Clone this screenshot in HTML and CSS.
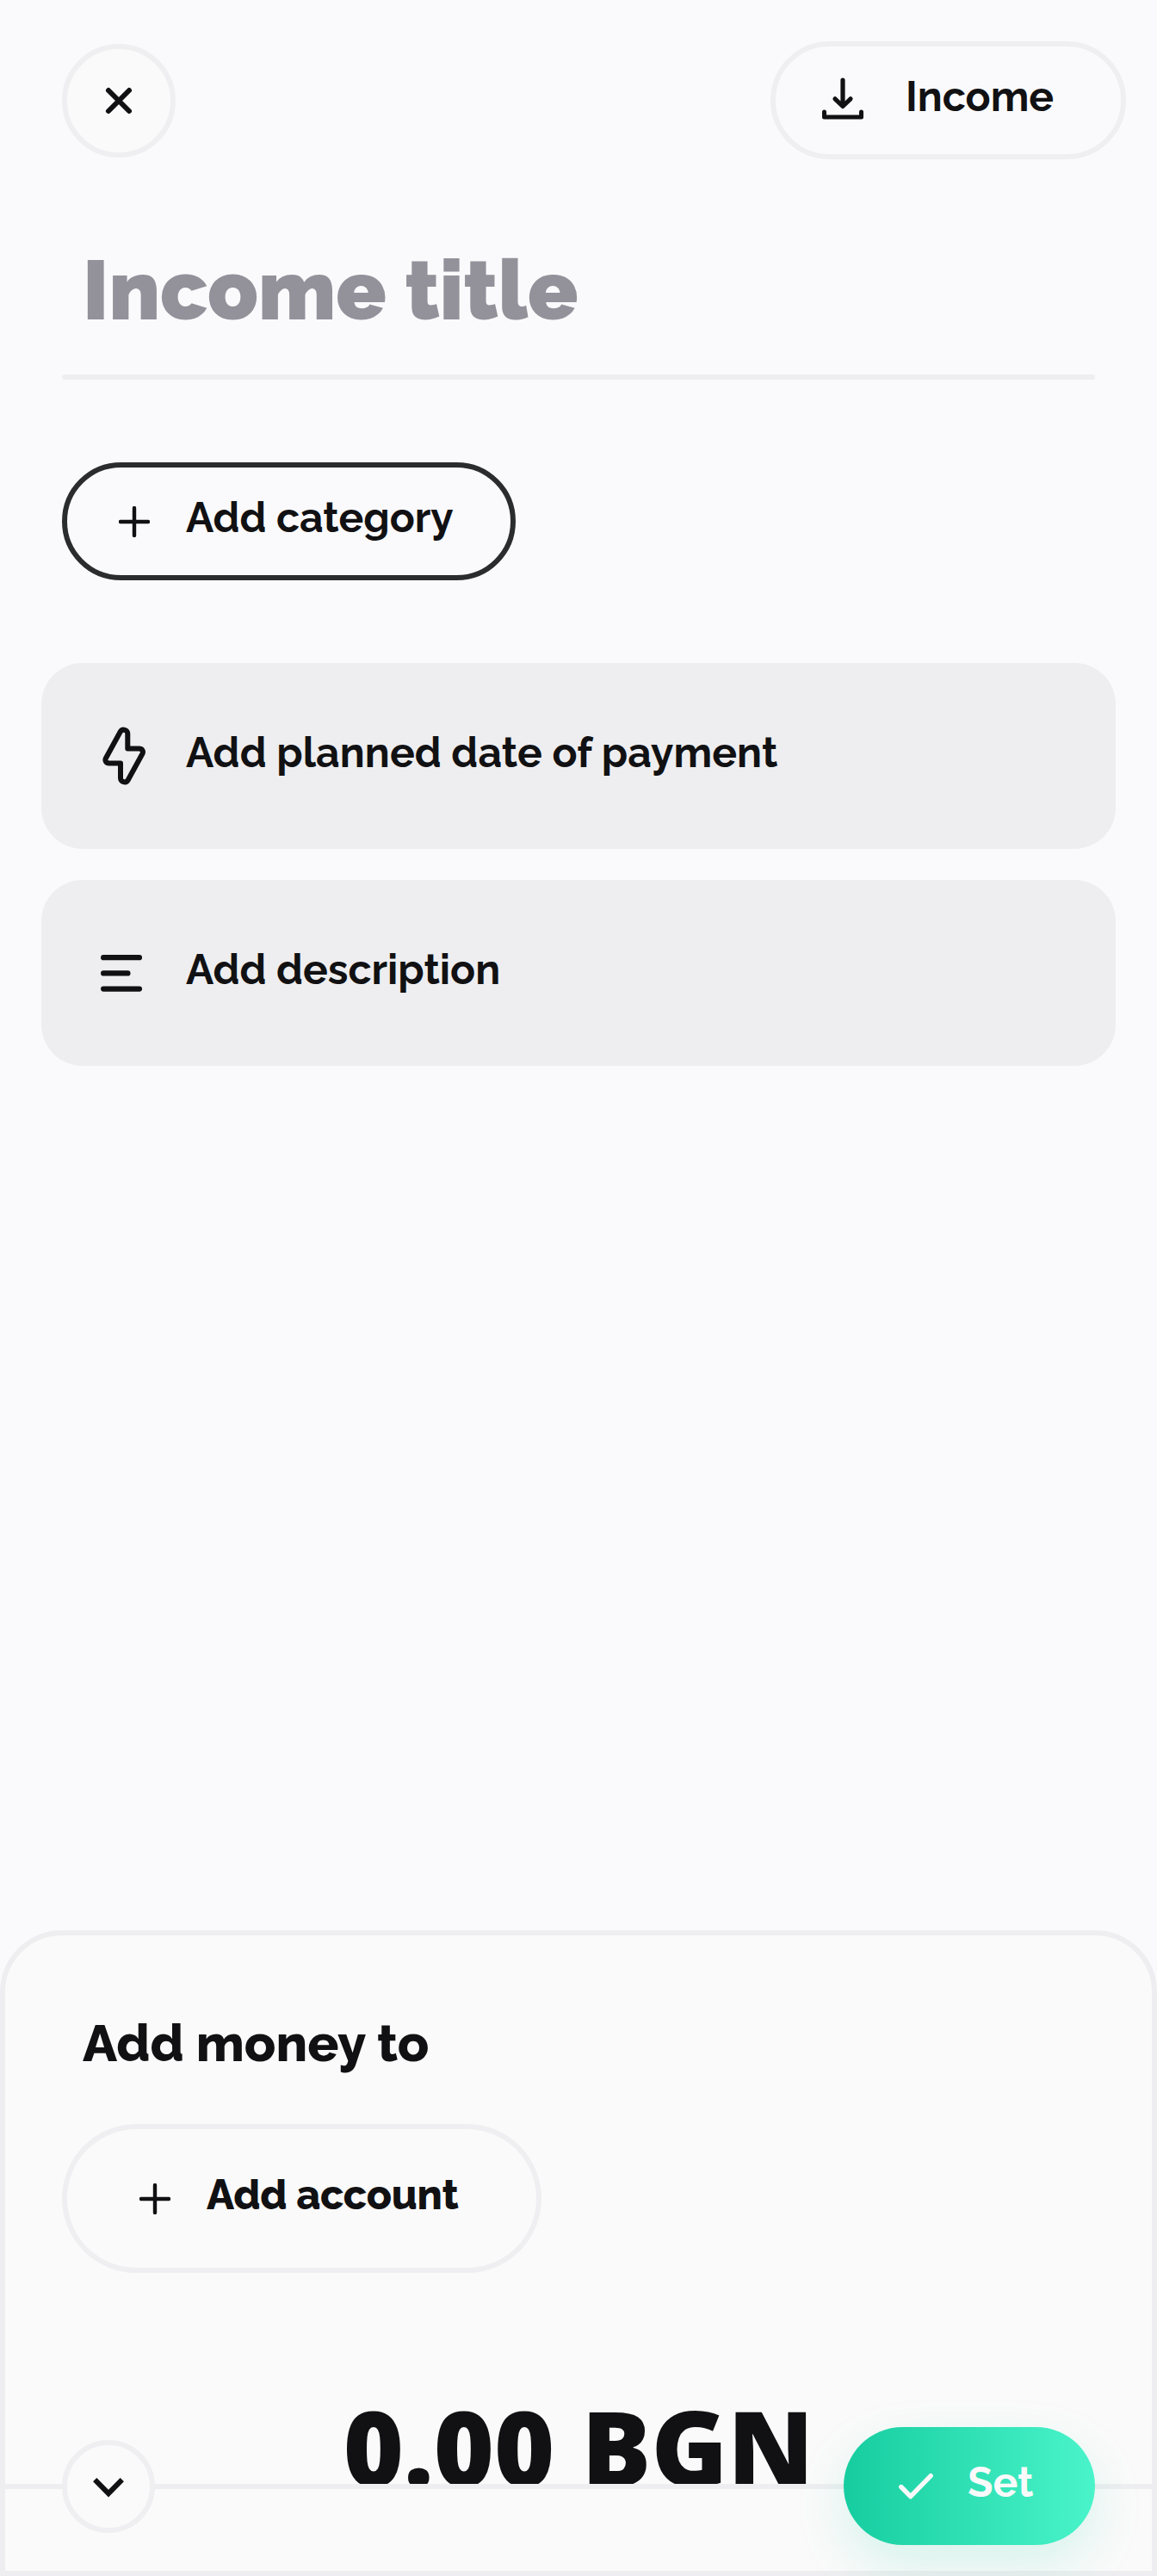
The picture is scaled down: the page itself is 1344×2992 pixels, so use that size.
FILE: index.html
```
<!DOCTYPE html>
<html lang="en">
<head>
<meta charset="utf-8">
<title>New income</title>
<link rel="stylesheet" href="styles.css">
</head>
<body>
<main class="screen">
  <header class="topbar">
    <button class="round-button" aria-label="Close">
      <svg class="icon" width="36" height="36" viewBox="0 0 36 36"><path d="M6 6 30 30M30 6 6 30" stroke-width="6"/></svg>
    </button>
    <button class="pill pill-type">
      <svg class="icon" width="48" height="54" viewBox="0 0 48 54"><path d="M24 3.100V33M15 24.800 24 33.500 33 24.800" stroke-width="5.200"/><path d="M2.500 40V45.900H45.500V40" stroke-width="5"/></svg>
      <span class="label">Income</span>
    </button>
  </header>

  <h1 class="title">Income title</h1>
  <div class="rule"></div>

  <button class="pill pill-category">
    <svg class="icon" width="36" height="36" viewBox="0 0 36 36"><path d="M18 2V34M2 18H34" stroke-width="4.400"/></svg>
    <span class="label">Add category</span>
  </button>

  <section class="cards">
    <button class="card">
      <svg class="icon" width="60" height="72" viewBox="0 0 60 72"><path d="M34.300 27.400H47.600C51.100 27.400 53 30.400 51.400 33.500L34.700 64C32.400 68.100 26 66.500 26 61.500V44.600H12.800C9.300 44.600 7.400 41.600 9 38.500L25.700 8C28 3.900 34.300 5.500 34.300 10.500Z" stroke-width="6"/></svg>
      <span class="label label-date">Add planned date of payment</span>
    </button>
    <button class="card">
      <svg class="icon" width="60" height="72" viewBox="0 0 60 72"><path d="M6.200 18.200H47.900M6.200 36.400H34.400M6.200 54.600H47.900" stroke-width="6.300"/></svg>
      <span class="label">Add description</span>
    </button>
  </section>

  <section class="sheet">
    <h2 class="sheet-title">Add money to</h2>
    <button class="pill pill-account">
      <svg class="icon" width="36" height="36" viewBox="0 0 36 36"><path d="M18 2V34M2 18H34" stroke-width="4.400"/></svg>
      <span class="label">Add account</span>
    </button>
    <div class="amount">0.00 BGN</div>
    <div class="divider"></div>
    <footer class="actions">
      <button class="round-button round-small" aria-label="Collapse">
        <svg class="icon chevron" width="48" height="48" viewBox="0 0 48 48"><path d="M8.200 16.200 24 32.200 39.800 16.200" stroke-width="6"/></svg>
      </button>
      <button class="pill pill-set">
        <svg class="icon" width="40" height="36" viewBox="0 0 40 36"><path d="M2.800 18.500 13.700 29.700 37.200 5.600" stroke-width="5.400"/></svg>
        <span class="label">Set</span>
      </button>
    </footer>
  </section>
</main>
</body>
</html>
```
FILE: styles.css
```
* {
  box-sizing: border-box;
}

body {
  margin: 0;
  background: #fafafc;
  color: #111113;
  font-family: Raleway, Inter, sans-serif;
}

button {
  margin: 0;
  padding: 0;
  border: 0;
  background: none;
  color: inherit;
  font: inherit;
}

.screen {
  display: flex;
  flex-direction: column;
  width: 1344px;
  height: 2992px;
  overflow: hidden;
}

.icon {
  display: block;
  flex: none;
  fill: none;
  stroke: currentColor;
  stroke-linecap: round;
  stroke-linejoin: round;
}

.chevron {
  stroke-linecap: butt;
  stroke-linejoin: miter;
}

.label {
  padding-bottom: 9px;
  font-size: 48px;
  font-weight: 700;
  line-height: 56px;
  white-space: nowrap;
}

.label-date {
  letter-spacing: 0.08px;
}

.topbar {
  display: flex;
  justify-content: space-between;
  padding: 48px 36px 0 72px;
}

.round-button {
  display: flex;
  align-items: center;
  justify-content: center;
  width: 132px;
  height: 132px;
  margin-top: 3px;
  border: 6px solid #efeff1;
  border-radius: 50%;
  background: #fafafa;
}

.round-small {
  width: 108px;
  height: 108px;
  margin-top: 1px;
}

.pill {
  display: flex;
  align-items: center;
  height: 137px;
  border: 6px solid #efeff1;
  border-radius: 69px;
}

.pill-type {
  width: 413px;
  padding-left: 54px;
  gap: 49px;
}

.title {
  margin: 96px 0 0 96px;
  color: #93919a;
  font-size: 96px;
  font-weight: 900;
  line-height: 112px;
}

.rule {
  height: 6px;
  margin: 42px 72px 0;
  border-radius: 3px;
  background: #eeeef0;
}

.pill-category {
  width: 527px;
  margin: 96px 0 0 72px;
  padding-left: 60px;
  gap: 42px;
  border-color: #2b2c2e;
}

.cards {
  display: flex;
  flex-direction: column;
  gap: 36px;
  margin: 96px 48px 0;
}

.card {
  display: flex;
  align-items: center;
  gap: 42px;
  height: 216px;
  padding-left: 66px;
  border-radius: 48px;
  background: #eeeef0;
}

.sheet {
  position: relative;
  display: flex;
  flex-direction: column;
  height: 750px;
  margin-top: auto;
  padding-top: 90px;
  border: 6px solid #eeeef0;
  border-radius: 72px 72px 0 0;
  background: #fafafa;
}

.sheet-title {
  margin: 0 0 0 90px;
  font-size: 60px;
  font-weight: 800;
  line-height: 70px;
}

.pill-account {
  width: 557px;
  height: 173px;
  margin: 59px 0 0 66px;
  padding-left: 84px;
  gap: 42px;
  border-radius: 87px;
}

.pill-account .label {
  font-weight: 800;
  letter-spacing: -0.3px;
}

.amount {
  height: 163px;
  margin-top: 120px;
  font-family: "Open Sans", sans-serif;
  font-size: 120px;
  font-weight: 800;
  line-height: 163px;
  text-align: center;
}

/* The divider runs over the foot of the amount. */
.divider {
  position: relative;
  height: 6px;
  margin-top: -38px;
  background: #eeeef0;
}

/* Buttons sit centred on the divider line. */
.actions {
  position: absolute;
  top: 571px;
  left: 66px;
  right: 66px;
  display: flex;
  align-items: center;
  justify-content: space-between;
}

.pill-set {
  width: 292px;
  padding-left: 64px;
  gap: 40px;
  border: 0;
  background: linear-gradient(90deg, #16cda0, #4af4ca);
  box-shadow: 0 24px 60px rgba(22, 205, 160, 0.15);
  color: #fafafa;
}
```
